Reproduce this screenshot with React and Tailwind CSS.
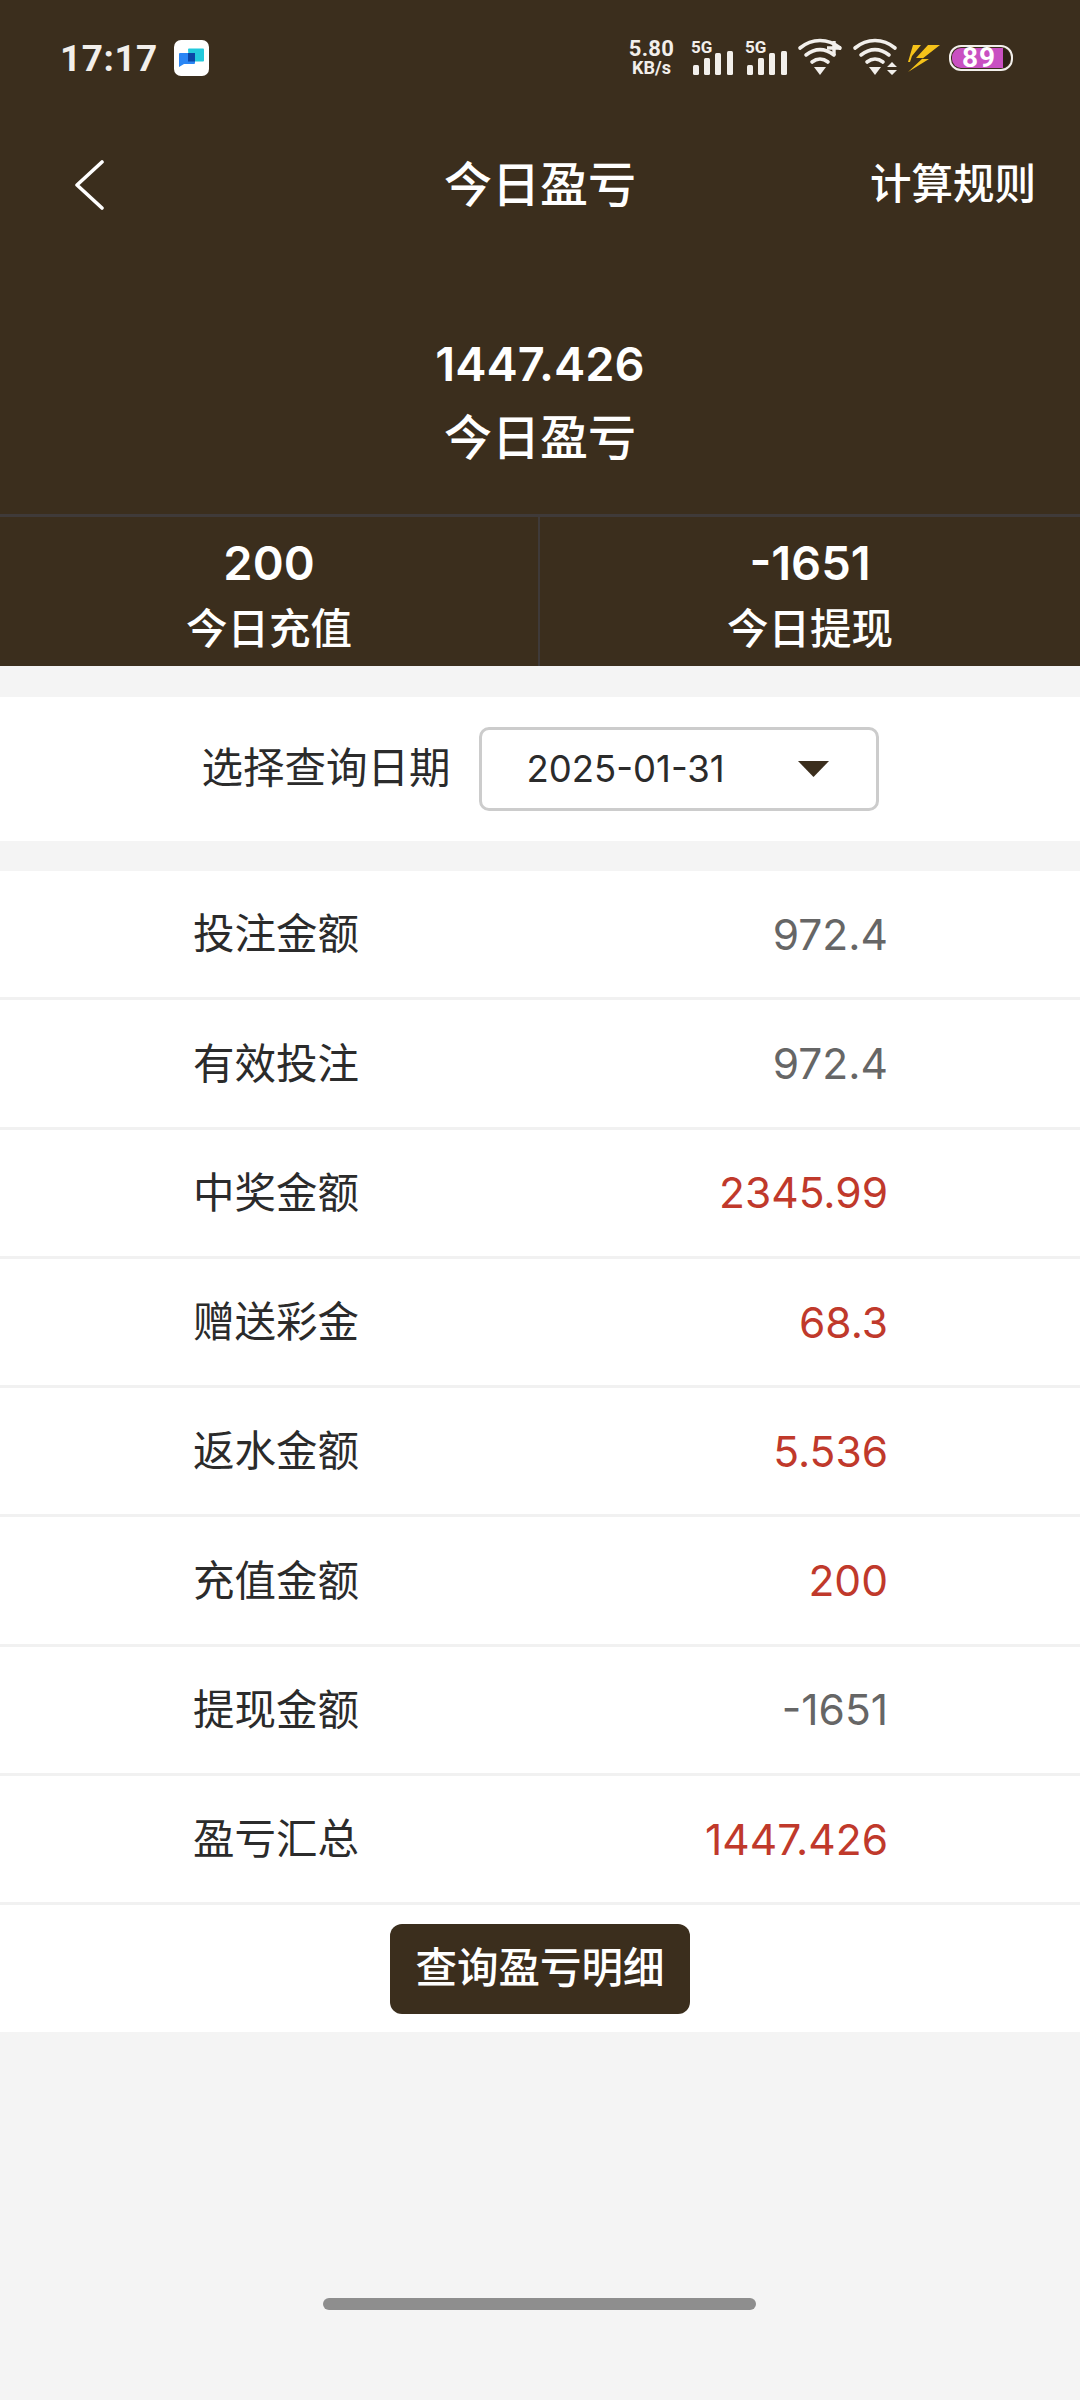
const rows = [
  { label: '投注金额', value: '972.4', red: false },
  { label: '有效投注', value: '972.4', red: false },
  { label: '中奖金额', value: '2345.99', red: true },
  { label: '赠送彩金', value: '68.3', red: true },
  { label: '返水金额', value: '5.536', red: true },
  { label: '充值金额', value: '200', red: true },
  { label: '提现金额', value: '-1651', red: false },
  { label: '盈亏汇总', value: '1447.426', red: true },
];

function Signal({ x }) {
  return (
    <g transform={`translate(${x} 0)`} fill="#f2efeb">
      <text x="1" y="17" fontSize="17" fontWeight="700" fontFamily="Roboto, sans-serif">5G</text>
      <rect x="3" y="29" width="6" height="10" rx="1.5" />
      <rect x="14" y="22" width="6" height="17" rx="1.5" />
      <rect x="25" y="17" width="6" height="22" rx="1.5" />
      <rect x="37" y="15" width="6" height="24" rx="1.5" />
    </g>
  );
}

function Wifi({ x }) {
  return (
    <g transform={`translate(${x} 1)`} fill="none" stroke="#f2efeb" strokeWidth="3.6" strokeLinecap="round">
      <path d="M2 11C14 1 30 1 42 11" />
      <path d="M8 18C17 11 27 11 36 18" />
      <path d="M14 25C19 21 25 21 30 25" />
      <path d="M16 30H28L22 38Z" fill="#f2efeb" stroke="none" />
    </g>
  );
}

function StatusBar() {
  return (
    <div className="h-[116px] flex items-center justify-between pl-[60px] pr-[67px]">
      <div className="flex items-center gap-[16px]">
        <span className="text-[37px] leading-none font-bold text-[#f2efeb] font-['Roboto',sans-serif] tracking-[0.5px]">17:17</span>
        <div className="w-[35px] h-[36px] rounded-[7px] bg-white flex items-center justify-center">
          <svg width="25" height="20" viewBox="0 0 25 20">
            <path d="M9 1.5a1 1 0 0 1 1-1h14a1 1 0 0 1 1 1v11a1 1 0 0 1-1 1h-14z" fill="#22c9dc" />
            <path d="M0 6a1 1 0 0 1 1-1h14a1 1 0 0 1 1 1v9a1 1 0 0 1-1 1H5l-5 3z" fill="#2a86f5" />
            <rect x="9" y="5" width="7" height="8.5" fill="#0b46a6" />
          </svg>
        </div>
      </div>
      <div className="flex items-center">
        <div className="w-[47px] flex flex-col items-center text-[#f2efeb] font-['Roboto',sans-serif] font-bold leading-none mr-[15px]">
          <span className="text-[22px] leading-[20px] tracking-[0.3px]">5.80</span>
          <span className="text-[18px] leading-[18px]">KB/s</span>
        </div>
        <svg width="250" height="44" viewBox="0 0 250 44">
          <Signal x={0} />
          <Signal x={54} />
          <Wifi x={108} />
          <path d="M137 12H151M144 5V19" stroke="#f2efeb" strokeWidth="3.4" fill="none" />
          <Wifi x={163} />
          <path d="M197 31L202 26L207 31ZM197 34L202 39L207 34Z" fill="#f2efeb" />
          <g transform="translate(218 9)" fill="#f5c219">
            <path d="M5 0H13L4 11L2 17H0Z" />
            <path d="M32 0H20L8 13H15L0 27L21 14H14Z" />
          </g>
        </svg>
        <div className="ml-[9px] w-[64px] h-[26px] rounded-[12px] border-[2px] border-[#f2efeb] p-[1px]">
          <div className="h-full rounded-[9px] bg-[#2e2218]">
            <div className="h-full w-[88%] rounded-l-[9px] bg-[#c950c2] flex items-center justify-center">
              <span className="pl-[3px] text-white text-[28px] font-bold leading-[20px] tracking-[1px] font-['Roboto',sans-serif]">89</span>
            </div>
          </div>
        </div>
      </div>
    </div>
  );
}

export default function App() {
  return (
    <div className="relative h-[2400px] bg-[#f4f4f4] font-['Inter','Noto_Sans_CJK_SC',sans-serif]">
      <div className="relative bg-[#3b2e1d] text-white">
        <StatusBar />
        <div className="relative h-[80px] mt-[29px] flex items-center justify-between pl-[74px] pr-[44px]">
          <svg width="32" height="50" viewBox="0 0 32 50" fill="none" stroke="#fff" strokeWidth="3.6" strokeLinecap="round" strokeLinejoin="round">
            <path d="M28 2L3 25L28 48" />
          </svg>
          <span className="text-[48px] leading-none font-medium absolute left-0 right-0 text-center pointer-events-none">今日盈亏</span>
          <span className="text-[41.5px] leading-none font-medium">计算规则</span>
        </div>
        <div className="flex flex-col items-center pt-[109px] pb-[32px]">
          <span className="text-[47px] leading-[60px] font-semibold">1447.426</span>
          <span className="text-[48px] leading-[88px] font-medium">今日盈亏</span>
        </div>
        <div className="grid grid-cols-2 border-t-[3px] border-[#3f3a39] h-[152px]">
          <div className="flex flex-col items-center pt-[17px] border-r-[2px] border-[#3f3a39]">
            <span className="text-[47px] leading-[58px] font-semibold">200</span>
            <span className="text-[41.5px] leading-[74px] font-medium">今日充值</span>
          </div>
          <div className="flex flex-col items-center pt-[17px]">
            <span className="text-[47px] leading-[58px] font-semibold">-1651</span>
            <span className="text-[41.5px] leading-[74px] font-medium">今日提现</span>
          </div>
        </div>
      </div>

      <div className="mt-[31px] h-[144px] bg-white flex items-center justify-center">
        <span className="text-[41.5px] leading-none text-[#2b2b2b] mr-[28px]">选择查询日期</span>
        <div className="w-[400px] h-[84px] rounded-[10px] border-[3px] border-[#cccccc] flex items-center justify-between pl-[45px] pr-[47px]">
          <span className="text-[36.5px] leading-none text-[#2b2b2b]">2025-01-31</span>
          <svg width="31" height="16" viewBox="0 0 31 16"><path d="M0 0H31L15.5 16Z" fill="#3b2e1d" /></svg>
        </div>
      </div>

      <div className="mt-[30px] bg-white pb-[18px]">
        {rows.map(row => (
          <div key={row.label} className="h-[129.25px] pt-[2px] border-b-[3px] border-[#f1f1f1] flex items-center justify-between pl-[193px] pr-[192px]">
            <span className="text-[41.5px] leading-none text-[#2b2b2b]">{row.label}</span>
            <span className={`text-[42.5px] leading-none ${row.red ? 'text-[#c0392b]' : 'text-[#666666]'}`}>{row.value}</span>
          </div>
        ))}
        <div className="flex justify-center pt-[19px]">
          <button className="w-[300px] h-[90px] rounded-[12px] bg-[#3b2e1d] text-white text-[41.5px] font-medium leading-none">查询盈亏明细</button>
        </div>
      </div>

      <div className="absolute left-[323px] top-[2298px] w-[433px] h-[12px] rounded-full bg-[#8e8e8e]" />
    </div>
  );
}
